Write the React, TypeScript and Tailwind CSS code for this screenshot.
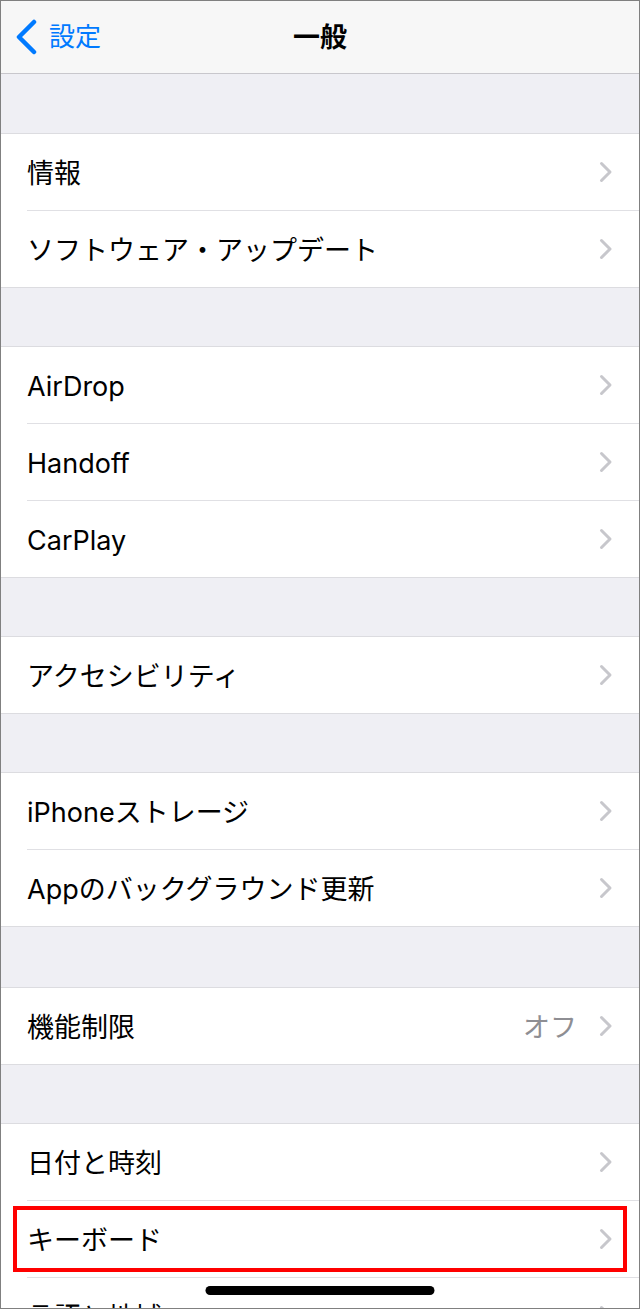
import React from "react";

// iOS 設定 > 一般 screen

type Row = { label: string; value?: string };

const groups: Row[][] = [
  [{ label: "情報" }, { label: "ソフトウェア・アップデート" }],
  [{ label: "AirDrop" }, { label: "Handoff" }, { label: "CarPlay" }],
  [{ label: "アクセシビリティ" }],
  [{ label: "iPhoneストレージ" }, { label: "Appのバックグラウンド更新" }],
  [{ label: "機能制限", value: "オフ" }],
  [{ label: "日付と時刻" }, { label: "キーボード" }, { label: "言語と地域" }],
];

const gapClass = ["h-[59px]", "h-[58px]", "h-[58px]", "h-[58px]", "h-[60px]", "h-[58px]"];

function Chevron() {
  return (
    <svg width="14" height="22" viewBox="0 0 14 22" fill="none">
      <path d="M2.5 2.5L11 11L2.5 19.5" stroke="#c7c7cc" strokeWidth="3" strokeLinecap="round" strokeLinejoin="round" />
    </svg>
  );
}

function SettingsRow({ row, last, highlight }: { row: Row; last: boolean; highlight?: boolean }) {
  return (
    <div className="relative pl-[26px]">
      <div className={`flex items-center pr-[26px] ${last ? "h-[76px]" : "h-[77px] border-b border-[#e0e0e4]"}`}>
        <span className="flex-1 pt-[3px] text-[27px] leading-none text-black">{row.label}</span>
        {row.value && <span className="mr-[22px] pt-[3px] text-[27px] leading-none text-[#8e8e93]">{row.value}</span>}
        <Chevron />
      </div>
      {highlight && (
        <div className="pointer-events-none absolute left-[12px] right-[12px] top-[5px] h-[66px] border-4 border-[#ff0000]" />
      )}
    </div>
  );
}

export default function App() {
  return (
    <div
      className="relative h-[1309px] w-[640px] overflow-hidden border border-[#808080] bg-[#efeff4]"
      style={{ fontFamily: 'Inter, "Noto Sans CJK JP", sans-serif' }}
    >
      {/* Nav bar */}
      <div className="relative flex h-[73px] items-center justify-center border-b border-[#c8c7cc] bg-[#f7f7f7]">
        <div className="absolute left-[14px] top-0 flex h-full items-center gap-[10px]">
          <svg width="24" height="36" viewBox="0 0 24 36" fill="none">
            <path d="M19 3L4 18L19 33" stroke="#007aff" strokeWidth="4.5" strokeLinecap="round" strokeLinejoin="round" />
          </svg>
          <span className="text-[26px] leading-none text-[#007aff]">設定</span>
        </div>
        <span className="text-[27px] font-bold leading-none text-black">一般</span>
      </div>

      {groups.map((g, gi) => (
        <div key={gi}>
          <div className={gapClass[gi]} />
          <div className="border-y border-[#dcdce0] bg-white">
            {g.map((r, ri) => (
              <SettingsRow key={r.label} row={r} last={ri === g.length - 1} highlight={r.label === "キーボード"} />
            ))}
          </div>
        </div>
      ))}

      {/* Home indicator */}
      <div className="absolute bottom-[13px] left-1/2 h-[9px] w-[229px] -translate-x-1/2 rounded-full bg-black" />
    </div>
  );
}
